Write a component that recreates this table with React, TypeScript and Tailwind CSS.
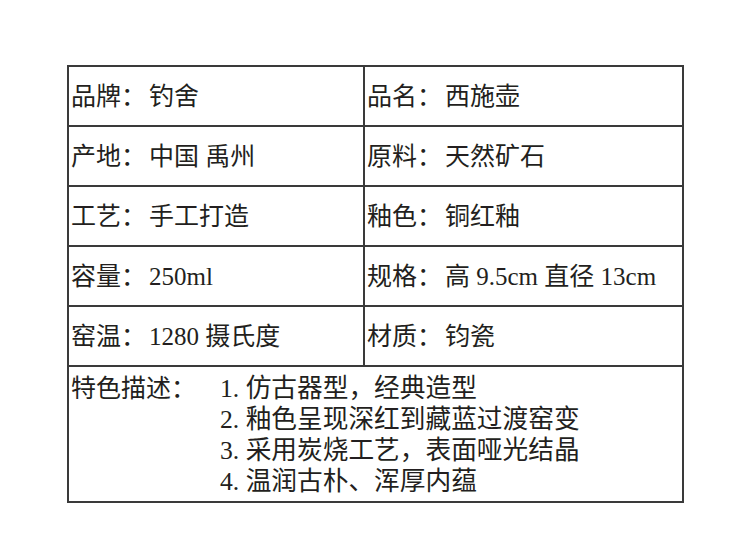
const rows: [string, string][] = [
  ["品牌：钓舍", "品名：西施壶"],
  ["产地：中国 禹州", "原料：天然矿石"],
  ["工艺：手工打造", "釉色：铜红釉"],
  ["容量：250ml", "规格：高 9.5cm 直径 13cm"],
  ["窑温：1280 摄氏度", "材质：钧瓷"],
];

const features = [
  "1. 仿古器型，经典造型",
  "2. 釉色呈现深红到藏蓝过渡窑变",
  "3. 采用炭烧工艺，表面哑光结晶",
  "4. 温润古朴、浑厚内蕴",
];

function Cell({ text }: { text: string }) {
  const i = text.indexOf("：");
  return (
    <td className="h-[60px] border-2 border-[#3a3a3a] pl-[2px] align-middle">
      <span>{text.slice(0, i)}</span>
      <span className="inline-block w-[28px]">：</span>
      <span>{text.slice(i + 1)}</span>
    </td>
  );
}

export default function App() {
  return (
    <div
      className="w-[750px] h-[543px] bg-white pt-[65px] pl-[67px] text-[#231f20] text-[25px] leading-none"
      style={{ fontFamily: '"Liberation Serif", "Noto Sans CJK SC", serif' }}
    >
      <table className="w-[617px] border-collapse">
        <colgroup>
          <col className="w-[296px]" />
          <col />
        </colgroup>
        <tbody>
          {rows.map(([a, b]) => (
            <tr key={a}>
              <Cell text={a} />
              <Cell text={b} />
            </tr>
          ))}
          <tr>
            <td colSpan={2} className="h-[136px] border-2 border-[#3a3a3a] pl-[2px] align-top pt-[6px]">
              <div className="flex">
                <span className="w-[149px] shrink-0 leading-[31px]">特色描述：</span>
                <div className="flex flex-col text-[25.7px]">
                  {features.map((f) => (
                    <span key={f} className="leading-[31px]">
                      {f}
                    </span>
                  ))}
                </div>
              </div>
            </td>
          </tr>
        </tbody>
      </table>
    </div>
  );
}
